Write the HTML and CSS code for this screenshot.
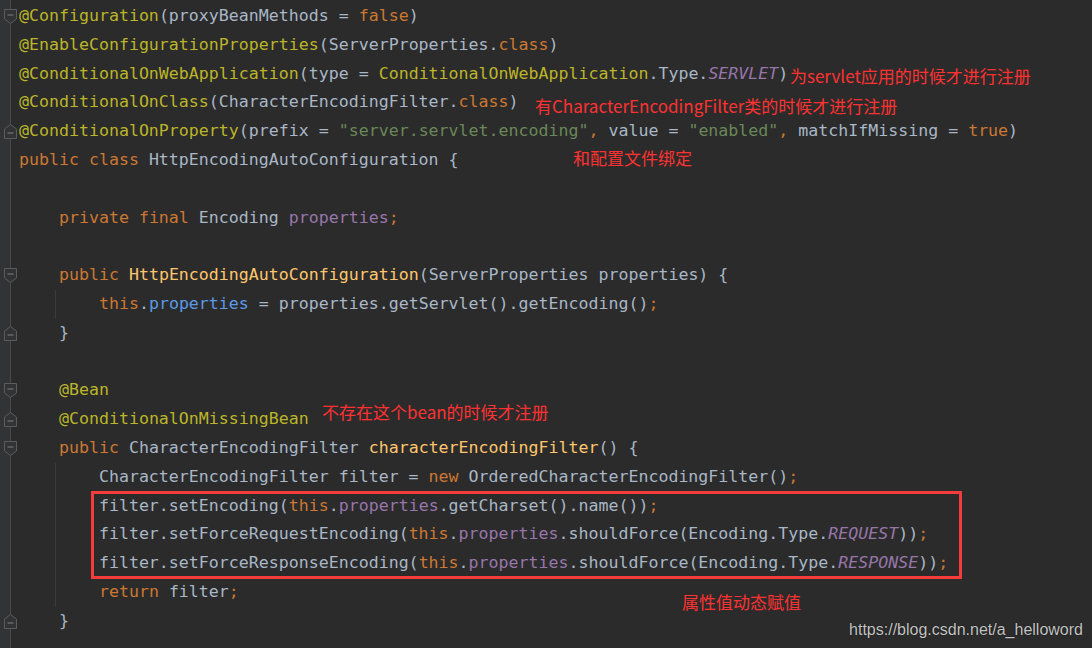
FILE: index.html
```html
<!DOCTYPE html>
<html>
<head>
    <title>HttpEncodingAutoConfiguration</title>
    <link rel="stylesheet" href="styles.css">
</head>
<body>
    <div id="editor">
        <div class="ln"><span class="gut"><svg class="fold" width="13" height="15" viewBox="0 0 13 15"><path d="M0.5 0.5H12.5V10L6.5 14.5L0.5 10Z"/><line x1="3.5" y1="6" x2="9.5" y2="6"/></svg></span><span class="code"><span class="an">@Configuration</span>(proxyBeanMethods = <span class="kw">false</span>)</span></div>
        <div class="ln"><span class="gut"></span><span class="code"><span class="an">@EnableConfigurationProperties</span>(ServerProperties.<span class="kw">class</span>)</span></div>
        <div class="ln"><span class="gut"></span><span class="code"><span class="an">@ConditionalOnWebApplication</span>(type = <span class="an">ConditionalOnWebApplication</span>.Type.<span class="cst">SERVLET</span>)</span><span class="note n1">为servlet应用的时候才进行注册</span></div>
        <div class="ln"><span class="gut"></span><span class="code"><span class="an">@ConditionalOnClass</span>(CharacterEncodingFilter.<span class="kw">class</span>)</span><span class="note n2">有CharacterEncodingFilter类的时候才进行注册</span></div>
        <div class="ln"><span class="gut"><svg class="fold" width="13" height="15" viewBox="0 0 13 15"><path d="M0.5 14.5H12.5V5L6.5 0.5L0.5 5Z"/><line x1="3.5" y1="9" x2="9.5" y2="9"/></svg></span><span class="code"><span class="an">@ConditionalOnProperty</span>(prefix = <span class="str">"server.servlet.encoding"</span><span class="kw">,</span> value = <span class="str">"enabled"</span><span class="kw">,</span> matchIfMissing = <span class="kw">true</span>)</span></div>
        <div class="ln"><span class="gut"></span><span class="code"><span class="kw">public class</span> HttpEncodingAutoConfiguration {</span><span class="note n3">和配置文件绑定</span></div>
        <div class="ln"><span class="gut"></span><span class="code"></span></div>
        <div class="ln"><span class="gut"></span><span class="code">    <span class="kw">private final</span> Encoding <span class="fld">properties</span><span class="kw">;</span></span></div>
        <div class="ln"><span class="gut"></span><span class="code"></span></div>
        <div class="ln"><span class="gut"><svg class="fold" width="13" height="15" viewBox="0 0 13 15"><path d="M0.5 0.5H12.5V10L6.5 14.5L0.5 10Z"/><line x1="3.5" y1="6" x2="9.5" y2="6"/></svg></span><span class="code">    <span class="kw">public</span> <span class="fn">HttpEncodingAutoConfiguration</span>(ServerProperties properties) {</span></div>
        <div class="ln"><span class="gut"></span><span class="code guide">        <span class="kw">this</span>.<span class="fw">properties</span> = properties.getServlet().getEncoding()<span class="kw">;</span></span></div>
        <div class="ln"><span class="gut"><svg class="fold" width="13" height="15" viewBox="0 0 13 15"><path d="M0.5 14.5H12.5V5L6.5 0.5L0.5 5Z"/><line x1="3.5" y1="9" x2="9.5" y2="9"/></svg></span><span class="code">    }</span></div>
        <div class="ln"><span class="gut"></span><span class="code"></span></div>
        <div class="ln"><span class="gut"><svg class="fold" width="13" height="15" viewBox="0 0 13 15"><path d="M0.5 0.5H12.5V10L6.5 14.5L0.5 10Z"/><line x1="3.5" y1="6" x2="9.5" y2="6"/></svg></span><span class="code">    <span class="an">@Bean</span></span></div>
        <div class="ln"><span class="gut"><svg class="fold" width="13" height="15" viewBox="0 0 13 15"><path d="M0.5 14.5H12.5V5L6.5 0.5L0.5 5Z"/><line x1="3.5" y1="9" x2="9.5" y2="9"/></svg></span><span class="code">    <span class="an">@ConditionalOnMissingBean</span></span><span class="note n4">不存在这个bean的时候才注册</span></div>
        <div class="ln"><span class="gut"><svg class="fold" width="13" height="15" viewBox="0 0 13 15"><path d="M0.5 0.5H12.5V10L6.5 14.5L0.5 10Z"/><line x1="3.5" y1="6" x2="9.5" y2="6"/></svg></span><span class="code">    <span class="kw">public</span> CharacterEncodingFilter <span class="fn">characterEncodingFilter</span>() {</span></div>
        <div class="ln"><span class="gut"></span><span class="code guide">        CharacterEncodingFilter filter = <span class="kw">new</span> OrderedCharacterEncodingFilter()<span class="kw">;</span></span></div>
        <div class="boxed">
            <div class="ln"><span class="gut"></span><span class="code guide">        filter.setEncoding(<span class="kw">this</span>.<span class="fld">properties</span>.getCharset().name())<span class="kw">;</span></span></div>
            <div class="ln"><span class="gut"></span><span class="code guide">        filter.setForceRequestEncoding(<span class="kw">this</span>.<span class="fld">properties</span>.shouldForce(Encoding.Type.<span class="cst">REQUEST</span>))<span class="kw">;</span></span></div>
            <div class="ln"><span class="gut"></span><span class="code guide">        filter.setForceResponseEncoding(<span class="kw">this</span>.<span class="fld">properties</span>.shouldForce(Encoding.Type.<span class="cst">RESPONSE</span>))<span class="kw">;</span></span></div>
        </div>
        <div class="ln"><span class="gut"></span><span class="code guide">        <span class="kw">return</span> filter<span class="kw">;</span></span><span class="note n5">属性值动态赋值</span></div>
        <div class="ln"><span class="gut"><svg class="fold" width="13" height="15" viewBox="0 0 13 15"><path d="M0.5 14.5H12.5V5L6.5 0.5L0.5 5Z"/><line x1="3.5" y1="9" x2="9.5" y2="9"/></svg></span><span class="code">    }</span></div>
        <div class="ln"><span class="gut"></span><span class="code"></span></div>

        <div class="watermark">https://blog.csdn.net/a_helloword</div>
    </div>
</body>
</html>
```

FILE: styles.css
```css
/* エディタ全体 */
body {
    margin: 0;
    background-color: #2b2b2b;
    overflow: hidden;
}

#editor {
    position: relative;
    height: 648px;
    padding-top: 2px;
    box-sizing: border-box;
    background: linear-gradient(to right, #313335 0 10px, #4a4a4a 10px 11px, #2b2b2b 11px);
}

.ln {
    position: relative;
    display: flex;
    height: 28.8px;
}

.gut {
    width: 19px;
    flex: none;
    display: flex;
    align-items: center;
}

.fold {
    margin-left: 4px;
}

.fold path {
    fill: #313335;
    stroke: #5c5c5c;
    stroke-width: 1;
}

.fold line {
    stroke: #6a6a6a;
    stroke-width: 1.4;
}

.code {
    white-space: pre;
    font-family: "DejaVu Sans Mono", monospace;
    font-size: 16.6px;
    line-height: 28.8px;
    color: #a9b7c6;
}

/* インデントガイド */
.guide {
    background: linear-gradient(to right, transparent 36px, #3b3b3b 36px 37px, transparent 37px);
}

.an { color: #bbb529; }
.kw { color: #cc7832; }
.str { color: #6a8759; }
.fld { color: #9876aa; }
.fw { color: #5c9ae6; }
.fn { color: #ffc66d; }
.cst { color: #9876aa; font-style: italic; }

/* 赤い注釈 */
.note {
    position: absolute;
    white-space: nowrap;
    font-family: "Microsoft YaHei", "Noto Sans CJK SC", sans-serif;
    font-size: 17px;
    line-height: 20px;
    color: #ff3232;
}

.n1 { left: 790px; top: 6px; }
.n2 { left: 535px; top: 8px; }
.n3 { left: 573px; top: 2px; }
.n4 { left: 322px; top: -3px; }
.n5 { left: 682px; top: 14px; }

.boxed {
    position: relative;
}

.boxed::after {
    content: "";
    position: absolute;
    left: 91px;
    top: -1px;
    width: 871px;
    height: 88px;
    border: 3px solid #f53b3b;
    box-sizing: border-box;
}

.watermark {
    position: absolute;
    right: 9px;
    bottom: 9px;
    font-family: "Liberation Sans", Arial, sans-serif;
    font-size: 16px;
    color: #c4c4c4;
    text-shadow: 0 0 1px #000;
}
```
